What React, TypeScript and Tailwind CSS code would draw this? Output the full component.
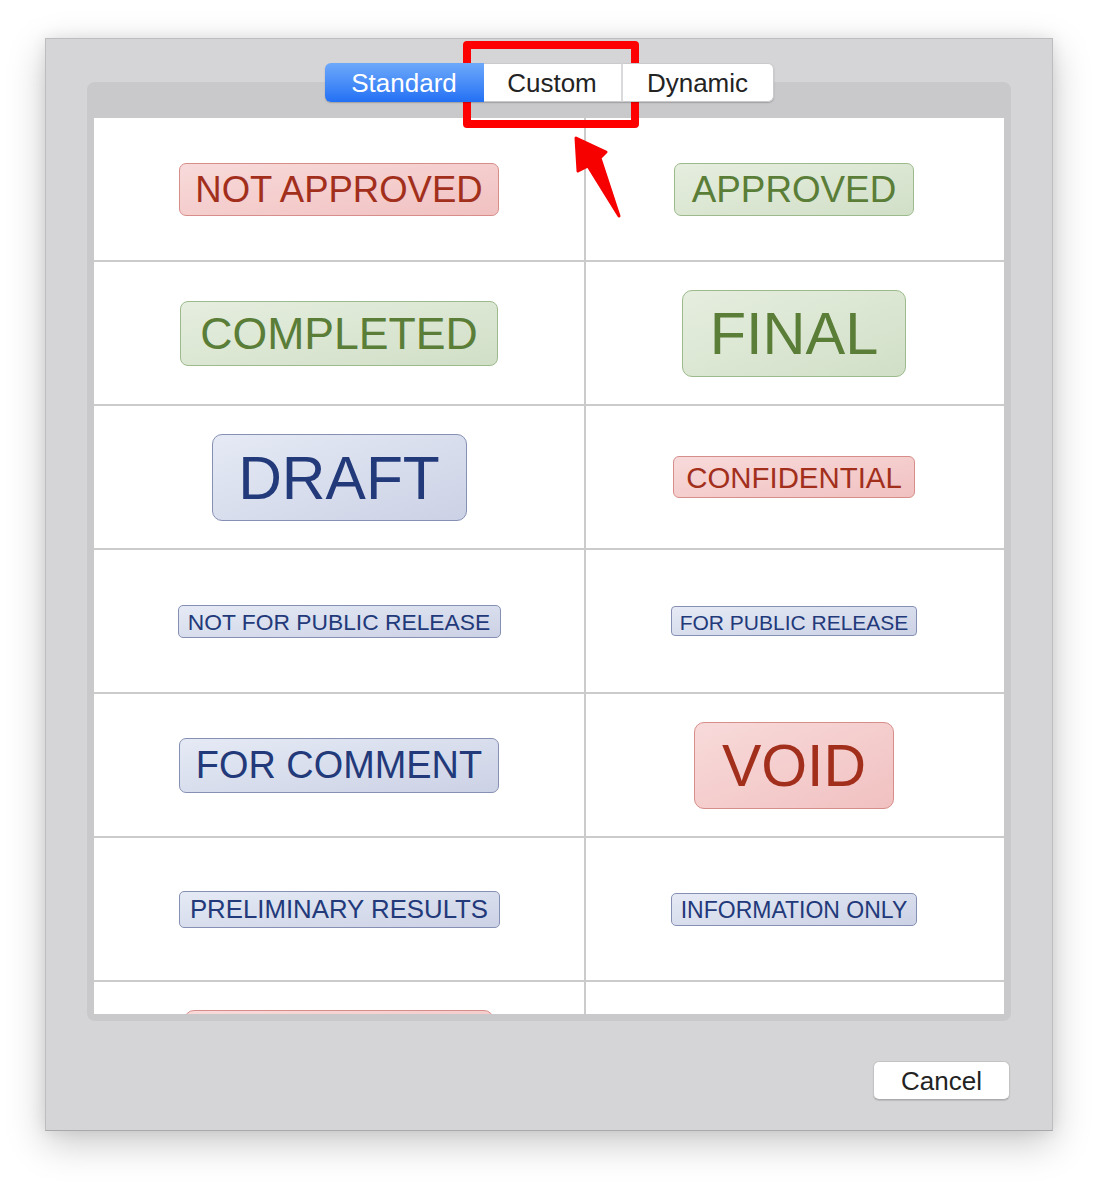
import React from "react";

type Tone = "red" | "green" | "blue";

const tones: Record<Tone, string> = {
  red: "text-[#a22f1c] bg-linear-to-br from-[#f8dada] to-[#f1c1c1] border-[#d78e8a]",
  green: "text-[#5a7d37] bg-linear-to-br from-[#e6eedf] to-[#d1dfc7] border-[#9cba8c]",
  blue: "text-[#22397a] bg-linear-to-br from-[#e5eaf5] to-[#ccd2e5] border-[#8690b4]",
};

function Stamp({
  text,
  tone,
  w,
  h,
  fs,
  r,
}: {
  text: string;
  tone: Tone;
  w: number;
  h: number;
  fs: number;
  r: number;
}) {
  return (
    <div
      className={`flex items-center justify-center border-[1.5px] whitespace-nowrap leading-none ${tones[tone]}`}
      style={{ width: w, height: h, fontSize: fs, borderRadius: r }}
    >
      <span className="relative top-[1px]">{text}</span>
    </div>
  );
}

type S = { text: string; tone: Tone; w: number; h: number; fs: number; r: number };

const rows: [S, S | null][] = [
  [
    { text: "NOT APPROVED", tone: "red", w: 320, h: 53, fs: 36.5, r: 7 },
    { text: "APPROVED", tone: "green", w: 240, h: 53, fs: 36.8, r: 7 },
  ],
  [
    { text: "COMPLETED", tone: "green", w: 318, h: 65, fs: 44.6, r: 8 },
    { text: "FINAL", tone: "green", w: 224, h: 87, fs: 59.5, r: 10 },
  ],
  [
    { text: "DRAFT", tone: "blue", w: 255, h: 87, fs: 60.5, r: 10 },
    { text: "CONFIDENTIAL", tone: "red", w: 242, h: 42, fs: 29.4, r: 6 },
  ],
  [
    { text: "NOT FOR PUBLIC RELEASE", tone: "blue", w: 323, h: 33, fs: 22.8, r: 5 },
    { text: "FOR PUBLIC RELEASE", tone: "blue", w: 246, h: 30, fs: 21, r: 4 },
  ],
  [
    { text: "FOR COMMENT", tone: "blue", w: 320, h: 55, fs: 37.9, r: 7 },
    { text: "VOID", tone: "red", w: 200, h: 87, fs: 59, r: 10 },
  ],
  [
    { text: "PRELIMINARY RESULTS", tone: "blue", w: 321, h: 37, fs: 25.8, r: 5 },
    { text: "INFORMATION ONLY", tone: "blue", w: 246, h: 33, fs: 23, r: 5 },
  ],
  [
    { text: "", tone: "red", w: 310, h: 86, fs: 40, r: 10 },
    null,
  ],
];

export default function App() {
  return (
    <div className="relative w-[1098px] h-[1184px] bg-white font-['Liberation_Sans',Arial,sans-serif] overflow-hidden">
      <div className="pt-[38px] pl-[45px]">
        {/* window */}
        <div className="w-[1008px] h-[1093px] bg-[#d5d5d7] border border-[#bdbdbf] border-b-[#a9a9ab] shadow-[0_12px_36px_rgba(0,0,0,0.22),0_0_14px_rgba(0,0,0,0.08)] flex flex-col pt-[24px]">
          {/* tabs */}
          <div className="relative z-10 flex justify-center">
            <div className="flex h-[39px] rounded-[6px] shadow-[0_1px_1.5px_rgba(0,0,0,0.22)] text-[26px] leading-none">
              <div className="w-[159px] flex items-center justify-center rounded-l-[6px] bg-linear-to-b from-[#6da8fa] to-[#2270f4] text-white">
                Standard
              </div>
              <div className="w-[139px] flex items-center justify-center bg-white border-y border-[#cacacc] border-r-2 border-r-[#d9d9db] text-[#232323]">
                Custom
              </div>
              <div className="w-[151px] flex items-center justify-center rounded-r-[6px] bg-white border-y border-r border-[#cacacc] text-[#232323]">
                Dynamic
              </div>
            </div>
          </div>
          {/* group box */}
          <div className="mx-[41px] -mt-[20px] h-[939px] rounded-[8px] bg-[#c9c9cb] pt-[36px] px-[7px] pb-[7px]">
            <div className="h-[896px] bg-white overflow-hidden">
              {rows.map((row, i) => (
                <div key={i} className="flex h-[144px] border-b-2 border-[#cbcbcb]">
                  <div className="w-[492px] border-r-2 border-[#cbcbcb] flex items-center justify-center">
                    <Stamp {...row[0]} />
                  </div>
                  <div className="flex-1 flex items-center justify-center pr-[2px]">
                    {row[1] && <Stamp {...row[1]} />}
                  </div>
                </div>
              ))}
            </div>
          </div>
          {/* buttons */}
          <div className="flex justify-end pr-[42px] pt-[40px]">
            <button className="w-[137px] h-[39px] rounded-[6px] bg-white border border-[#c3c3c5] border-b-[#ababad] shadow-[0_1px_1px_rgba(0,0,0,0.12)] text-[26px] leading-none text-[#232323]">
              Cancel
            </button>
          </div>
        </div>
      </div>

      {/* annotation: red box */}
      <div className="absolute left-[463px] top-[41px] w-[176px] h-[87px] border-[8px] border-[#fe0000] rounded-[4px]" />
      {/* annotation: arrow */}
      <svg className="absolute left-0 top-0" width="1098" height="1184" viewBox="0 0 1098 1184">
        <polygon
          points="576,138 606,152 600,158 619,216 588,166 578,171"
          fill="#f70000"
          stroke="#f70000"
          strokeWidth="3"
          strokeLinejoin="round"
        />
      </svg>
    </div>
  );
}
